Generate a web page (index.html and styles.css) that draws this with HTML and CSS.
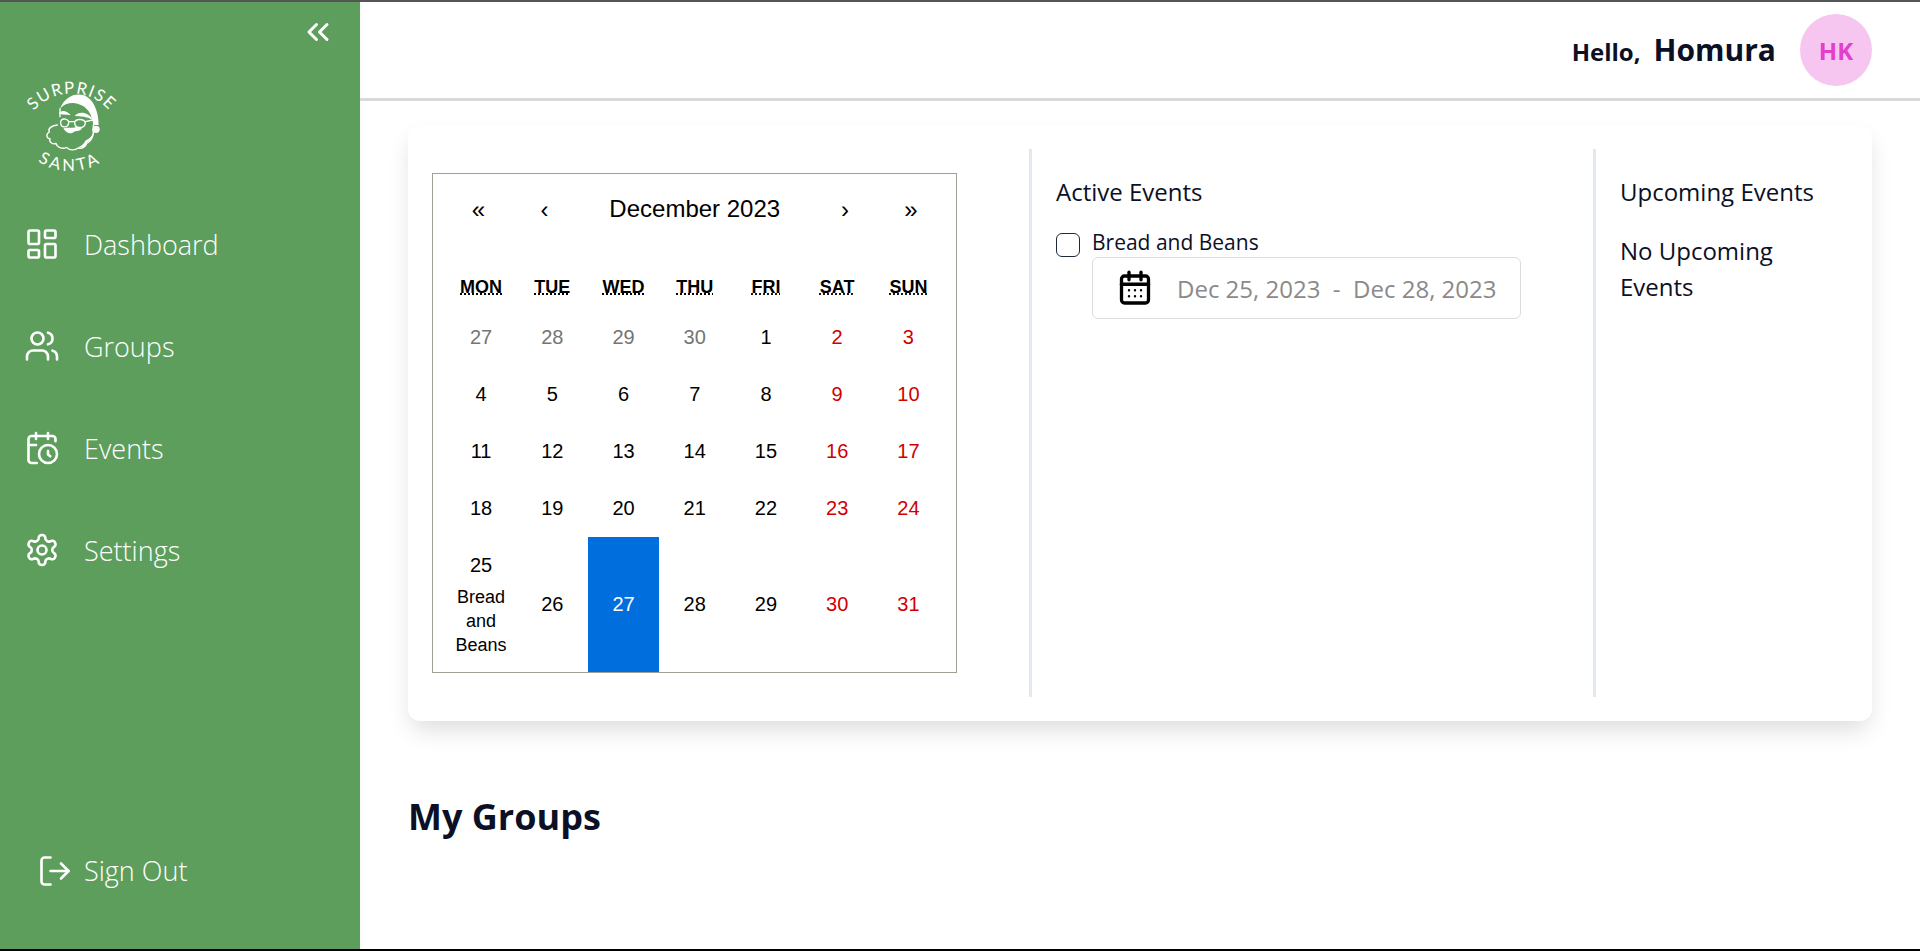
FILE: index.html
```html
<!DOCTYPE html>
<html>
<head>
  <meta charset="UTF-8">
  <title>Surprise Santa</title>
  <link rel="stylesheet" href="styles.css">
</head>
<body>
<div class="app">
  <aside class="sidebar">
    <div class="collapse-row">
      <svg class="collapse-icon" viewBox="0 0 24 24"><path d="m11 17-5-5 5-5"/><path d="m18 17-5-5 5-5"/></svg>
    </div>
    <svg class="logo" viewBox="0 0 360 330">
      <path id="arcTop" class="logo-guide" d="M40 182 A150 150 0 0 1 330 182"/>
      <path id="arcBottom" class="logo-guide" d="M50 245 A175 175 0 0 0 310 245"/>
      <text class="logo-text"><textPath href="#arcTop" startOffset="50%">SURPRISE</textPath></text>
      <text class="logo-text logo-text-low"><textPath href="#arcBottom" startOffset="50%">SANTA</textPath></text>
      <path class="logo-fill" d="M150 116C165 80 195 68 222 76C250 86 266 125 266 165L250 165C246 132 232 110 205 102C185 96 165 100 150 116Z"/>
      <circle class="logo-fill" cx="258" cy="178" r="11"/>
      <path class="logo-fill" d="M146 130C155 118 172 122 182 136C168 134 155 136 146 130ZM194 138C208 122 234 126 250 150C232 140 212 138 194 138Z"/>
      <path class="logo-line" d="M150 116V140M250 165V185M152 155C150 175 172 175 176 160C178 146 156 142 152 155ZM194 158C194 176 222 178 226 160C226 146 196 144 194 158ZM176 155H194M226 155L248 150"/>
      <path class="logo-line" d="M142 165C126 166 112 176 118 186C106 192 110 206 120 206C116 218 130 224 138 220C142 234 160 238 170 232C178 242 196 242 204 234C216 238 228 230 230 220C242 216 250 200 250 185"/>
      <path class="logo-fill" d="M204 232C220 236 230 226 232 216C244 212 252 198 252 184C246 200 236 208 226 212C222 222 214 228 204 232Z"/>
      <path class="logo-fill" d="M160 176C170 170 180 176 196 172C204 170 212 172 216 176C206 186 196 180 188 188C178 194 168 186 160 176Z"/>
    </svg>
    <nav class="menu">
      <a class="menu-item">
        <svg class="menu-icon" viewBox="0 0 24 24"><rect x="3" y="3" width="7" height="9" rx="1"/><rect x="14" y="3" width="7" height="5" rx="1"/><rect x="14" y="12" width="7" height="9" rx="1"/><rect x="3" y="16" width="7" height="5" rx="1"/></svg>
        <span>Dashboard</span>
      </a>
      <a class="menu-item">
        <svg class="menu-icon" viewBox="0 0 24 24"><path d="M16 21v-2a4 4 0 0 0-4-4H6a4 4 0 0 0-4 4v2"/><circle cx="9" cy="7" r="4"/><path d="M22 21v-2a4 4 0 0 0-3-3.87"/><path d="M16 3.13a4 4 0 0 1 0 7.75"/></svg>
        <span>Groups</span>
      </a>
      <a class="menu-item">
        <svg class="menu-icon" viewBox="0 0 24 24"><path d="M21 7.5V6a2 2 0 0 0-2-2H5a2 2 0 0 0-2 2v14a2 2 0 0 0 2 2h3.5"/><path d="M16 2v4"/><path d="M8 2v4"/><path d="M3 10h5"/><path d="M17.5 17.5 16 16.3V14"/><circle cx="16" cy="16" r="6"/></svg>
        <span>Events</span>
      </a>
      <a class="menu-item">
        <svg class="menu-icon" viewBox="0 0 24 24"><path d="M12.22 2h-.44a2 2 0 0 0-2 2v.18a2 2 0 0 1-1 1.73l-.43.25a2 2 0 0 1-2 0l-.15-.08a2 2 0 0 0-2.73.73l-.22.38a2 2 0 0 0 .73 2.73l.15.1a2 2 0 0 1 1 1.72v.51a2 2 0 0 1-1 1.74l-.15.09a2 2 0 0 0-.73 2.73l.22.38a2 2 0 0 0 2.73.73l.15-.08a2 2 0 0 1 2 0l.43.25a2 2 0 0 1 1 1.73V20a2 2 0 0 0 2 2h.44a2 2 0 0 0 2-2v-.18a2 2 0 0 1 1-1.73l.43-.25a2 2 0 0 1 2 0l.15.08a2 2 0 0 0 2.73-.73l.22-.39a2 2 0 0 0-.73-2.73l-.15-.08a2 2 0 0 1-1-1.74v-.5a2 2 0 0 1 1-1.74l.15-.09a2 2 0 0 0 .73-2.73l-.22-.38a2 2 0 0 0-2.73-.73l-.15.08a2 2 0 0 1-2 0l-.43-.25a2 2 0 0 1-1-1.73V4a2 2 0 0 0-2-2z"/><circle cx="12" cy="12" r="3"/></svg>
        <span>Settings</span>
      </a>
    </nav>
    <a class="signout">
      <svg class="menu-icon" viewBox="0 0 24 24"><path d="M9 21H5a2 2 0 0 1-2-2V5a2 2 0 0 1 2-2h4"/><path d="m16 17 5-5-5-5"/><path d="M21 12H9"/></svg>
      <span>Sign Out</span>
    </a>
  </aside>

  <main class="main">
    <header class="topbar">
      <span class="hello">Hello,</span>
      <span class="username">Homura</span>
      <div class="avatar">HK</div>
    </header>

    <section class="card">
      <div class="col-calendar">
        <div class="calendar">
          <div class="cal-nav">
            <span class="cal-btn">«</span>
            <span class="cal-btn">‹</span>
            <span class="cal-title">December 2023</span>
            <span class="cal-btn">›</span>
            <span class="cal-btn">»</span>
          </div>
          <div class="cal-weekdays">
            <abbr title="Monday">Mon</abbr>
            <abbr title="Tuesday">Tue</abbr>
            <abbr title="Wednesday">Wed</abbr>
            <abbr title="Thursday">Thu</abbr>
            <abbr title="Friday">Fri</abbr>
            <abbr title="Saturday">Sat</abbr>
            <abbr title="Sunday">Sun</abbr>
          </div>
          <div class="cal-days">
            <div class="tile out">27</div>
            <div class="tile out">28</div>
            <div class="tile out">29</div>
            <div class="tile out">30</div>
            <div class="tile">1</div>
            <div class="tile wkend">2</div>
            <div class="tile wkend">3</div>
            <div class="tile">4</div>
            <div class="tile">5</div>
            <div class="tile">6</div>
            <div class="tile">7</div>
            <div class="tile">8</div>
            <div class="tile wkend">9</div>
            <div class="tile wkend">10</div>
            <div class="tile">11</div>
            <div class="tile">12</div>
            <div class="tile">13</div>
            <div class="tile">14</div>
            <div class="tile">15</div>
            <div class="tile wkend">16</div>
            <div class="tile wkend">17</div>
            <div class="tile">18</div>
            <div class="tile">19</div>
            <div class="tile">20</div>
            <div class="tile">21</div>
            <div class="tile">22</div>
            <div class="tile wkend">23</div>
            <div class="tile wkend">24</div>
            <div class="tile has-event">25<div class="tile-event">Bread and Beans</div></div>
            <div class="tile">26</div>
            <div class="tile today">27</div>
            <div class="tile">28</div>
            <div class="tile">29</div>
            <div class="tile wkend">30</div>
            <div class="tile wkend">31</div>
          </div>
        </div>
      </div>

      <div class="col-events">
        <h2 class="col-title">Active Events</h2>
        <div class="event-row">
          <input class="event-check" type="checkbox">
          <span>Bread and Beans</span>
        </div>
        <div class="event-dates">
          <svg class="date-icon" viewBox="0 0 24 24"><rect x="3" y="4" width="18" height="18" rx="2"/><path d="M8 1.5v5"/><path d="M16 1.5v5"/><path d="M3 9.5h18"/><path class="date-dots" d="M8 13.5h.01M12 13.5h.01M16 13.5h.01M8 17.5h.01M12 17.5h.01M16 17.5h.01"/></svg>
          <span>Dec 25, 2023&nbsp; - &nbsp;Dec 28, 2023</span>
        </div>
      </div>

      <div class="col-upcoming">
        <h2 class="col-title">Upcoming Events</h2>
        <p class="none-text">No Upcoming Events</p>
      </div>
    </section>

    <h1 class="groups-title">My Groups</h1>
  </main>
</div>
</body>
</html>
```

FILE: styles.css
```css
*{
  box-sizing: border-box;
}
body{
  margin: 0;
  font-family: "Open Sans", sans-serif;
  color: #0b1026;
  background-color: #fff;
}
.app{
  display: flex;
  height: 100vh;
  border-top: 2px solid #555;
  border-bottom: 2px solid #000;
  overflow: hidden;
}

/* sidebar */
.sidebar{
  width: 360px;
  flex-shrink: 0;
  display: flex;
  flex-direction: column;
  background-color: #5e9e5c;
  color: #fff;
  box-shadow: 0 0 6px rgba(0,0,0,.04);
}
.collapse-row{
  display: flex;
  justify-content: flex-end;
  padding: 12px 24px 0 0;
}
.collapse-icon{
  width: 36px;
  height: 36px;
  fill: none;
  stroke: #fff;
  stroke-width: 2;
  stroke-linecap: round;
  stroke-linejoin: round;
}
.logo{
  width: 120px;
  height: 110px;
  margin: 20px 0 0 10px;
}
.logo-guide{
  fill: none;
}
.logo-text{
  font-family: "Lato", sans-serif;
  font-weight: 400;
  font-size: 50px;
  letter-spacing: 4px;
  fill: #fff;
  text-anchor: middle;
}
.logo-text-low{
  letter-spacing: 9px;
}
.logo-fill{
  fill: #fff;
}
.logo-line{
  fill: none;
  stroke: #fff;
  stroke-width: 4;
  stroke-linecap: round;
  stroke-linejoin: round;
}
.menu{
  display: flex;
  flex-direction: column;
  margin-top: 13px;
}
.menu-item{
  height: 102px;
  display: flex;
  align-items: center;
  gap: 24px;
  padding-left: 24px;
  font-size: 27px;
  font-weight: 300;
}
.menu-icon{
  width: 36px;
  height: 36px;
  fill: none;
  stroke: #fff;
  stroke-width: 1.75;
  stroke-linecap: round;
  stroke-linejoin: round;
  flex-shrink: 0;
}
.signout{
  margin-top: auto;
  display: flex;
  align-items: center;
  gap: 11px;
  padding: 0 0 60px 37px;
  font-size: 27px;
  font-weight: 300;
}

/* main column */
.main{
  flex: 1;
  min-width: 0;
  padding-bottom: 20px;
}
.topbar{
  height: 99px;
  display: flex;
  justify-content: flex-end;
  align-items: center;
  padding: 0 48px 0 0;
  border-bottom: 3px solid #d9d9d9;
}
.hello{
  font-size: 24px;
  font-weight: 700;
  margin-top: 3px;
}
.username{
  font-size: 30px;
  font-weight: 700;
  margin: -2px 0 0 13px;
}
.avatar{
  width: 72px;
  height: 72px;
  margin-left: 24px;
  border-radius: 50%;
  display: flex;
  align-items: center;
  justify-content: center;
  background-color: #f6c6f1;
  color: #e33fcb;
  font-size: 24px;
  font-weight: 700;
}
.card{
  display: flex;
  height: 596px;
  margin: 24px 48px 0;
  padding: 24px;
  background-color: #fff;
  border-radius: 12px;
  box-shadow: 0 12px 24px -4px rgba(0,0,0,.14);
}
.col-calendar{
  width: 597px;
  padding: 24px 0 0;
}
.col-events{
  width: 564px;
  border-left: 3px solid #e2e8f0;
  padding: 24px 24px 0;
}
.col-upcoming{
  flex: 1;
  border-left: 3px solid #e2e8f0;
  padding: 24px 0 0 24px;
}
.col-title{
  margin: 0;
  font-size: 24px;
  font-weight: 400;
  line-height: 37px;
}
.none-text{
  margin: 23px 0 0;
  font-size: 24px;
  line-height: 36px;
}
.event-row{
  display: flex;
  align-items: center;
  gap: 12px;
  margin-top: 20px;
  font-size: 21px;
  line-height: 24px;
  height: 24px;
}
.event-check{
  appearance: none;
  width: 24px;
  height: 24px;
  margin: 6px 0 0;
  border: 1.5px solid #1e293b;
  border-radius: 6px;
  background-color: #fff;
}
.event-dates{
  width: 429px;
  height: 62px;
  margin: 3px 0 0 36px;
  display: flex;
  align-items: center;
  gap: 24px;
  padding-left: 24px;
  border: 1px solid #dcdcdc;
  border-radius: 6px;
  font-size: 24px;
  color: #8a8a8a;
}
.date-icon{
  width: 36px;
  height: 36px;
  fill: none;
  stroke: #000;
  stroke-width: 2.2;
  stroke-linecap: round;
  stroke-linejoin: round;
}
.date-dots{
  stroke-width: 1.6;
}
.groups-title{
  margin: 71px 48px 0;
  font-size: 36px;
  font-weight: 700;
  line-height: 49px;
}

/* calendar */
.calendar{
  width: 525px;
  height: 500px;
  padding: 0 12px 0 12.5px;
  border: 1px solid #a0a096;
  font-family: "Liberation Sans", Arial, sans-serif;
  color: #000;
}
.cal-nav{
  display: flex;
  height: 66px;
  padding-top: 6px;
  align-items: center;
  font-size: 24px;
}
.cal-btn{
  width: 66px;
  text-align: center;
}
.cal-title{
  flex: 1;
  text-align: center;
  margin-top: -3px;
}
.cal-weekdays{
  display: grid;
  grid-template-columns: repeat(7, 1fr);
  height: 69px;
  padding-top: 37px;
  font-size: 18px;
  font-weight: 700;
  text-align: center;
  text-transform: uppercase;
}
.cal-days{
  display: grid;
  grid-template-columns: repeat(7, 1fr);
  grid-template-rows: repeat(4, 57px) 135px;
  font-size: 20px;
}
.tile{
  display: flex;
  flex-direction: column;
  align-items: center;
  justify-content: center;
  text-align: center;
}
.has-event{
  padding-top: 2px;
}
.tile-event{
  margin-top: 8px;
  padding: 0 6px;
  font-size: 18px;
  line-height: 24px;
}
.out{
  color: #757575;
}
.wkend{
  color: #d10000;
}
.today{
  background-color: #006edc;
  color: #fff;
}
```
